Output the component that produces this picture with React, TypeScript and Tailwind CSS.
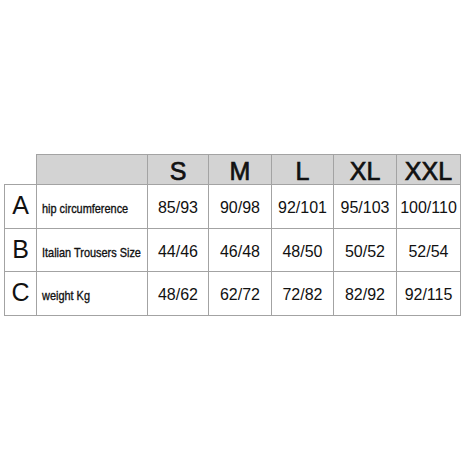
const sizes = ["S", "M", "L", "XL", "XXL"];

const rows = [
  { letter: "A", label: "hip circumference", values: ["85/93", "90/98", "92/101", "95/103", "100/110"] },
  { letter: "B", label: "Italian Trousers Size", values: ["44/46", "46/48", "48/50", "50/52", "52/54"] },
  { letter: "C", label: "weight Kg", values: ["48/62", "62/72", "72/82", "82/92", "92/115"] },
];

const App = () => {
  return (
    <div className="w-[463px] h-[463px] bg-white pt-[154px] pl-[4px] font-['Liberation_Sans',Arial,sans-serif] text-[#111]">
      <table className="w-[456px] border-collapse table-fixed">
        <colgroup>
          <col className="w-[32px]" />
          <col className="w-[111px]" />
          <col className="w-[61px]" />
          <col className="w-[63px]" />
          <col className="w-[62px]" />
          <col className="w-[63px]" />
          <col className="w-[64px]" />
        </colgroup>
        <thead>
          <tr className="h-[29px]">
            <th className="p-0 border-0"></th>
            <th className="p-0 bg-[#d3d3d3] border border-[#a3a3a3]"></th>
            {sizes.map((s) => (
              <th
                key={s}
                className="p-0 pt-[4px] bg-[#d3d3d3] border border-[#a3a3a3] text-[25px] font-normal leading-none text-center [-webkit-text-stroke:0.7px_#111]"
              >
                {s}
              </th>
            ))}
          </tr>
        </thead>
        <tbody>
          {rows.map((row, r) => (
            <tr key={row.letter} className={r === 1 ? "h-[43px]" : "h-[44px]"}>
              <td className="p-0 border border-[#a3a3a3] text-[25px] leading-none text-center pb-[2px]">
                {row.letter}
              </td>
              <td className="p-0 pl-[5px] pt-[3px] border border-[#a3a3a3] text-left overflow-visible">
                <span className="inline-block origin-left scale-x-[0.84] text-[13px] leading-none [-webkit-text-stroke:0.35px_#111] whitespace-nowrap">
                  {row.label}
                </span>
              </td>
              {row.values.map((v) => (
                <td key={v} className="p-0 pt-[3px] border border-[#a3a3a3] text-[16px] leading-none text-center whitespace-nowrap">
                  {v}
                </td>
              ))}
            </tr>
          ))}
        </tbody>
      </table>
    </div>
  );
};

export default App;
